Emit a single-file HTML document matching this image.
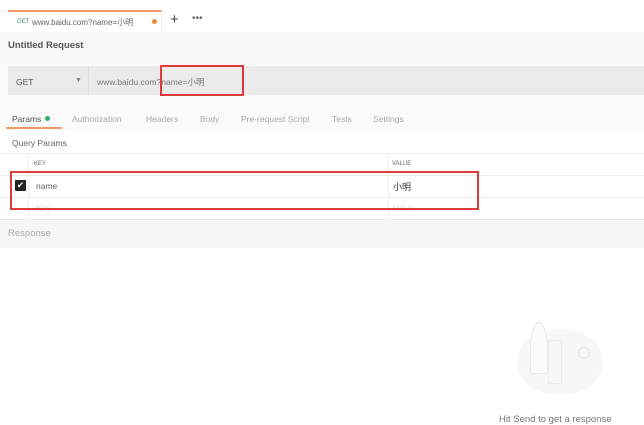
<!DOCTYPE html><html><head><style>
body{margin:0;width:644px;height:425px;background:#fff;font-family:"Liberation Sans","Noto Sans CJK SC",sans-serif;position:relative;overflow:hidden;color:#555}
.a{position:absolute}
</style></head><body>
<div class="a" style="left:8px;top:10px;width:153px;height:22px;border-top:2px solid #f29a6a;background:#fff;border-right:1px solid #eee"></div>
<div class="a" style="left:17px;top:19px;font-size:6px;color:#3a9a5a">GET</div>
<div class="a" style="left:32px;top:17px;font-size:8px;color:#666">www.baidu.com?name=小明</div>
<div class="a" style="left:152px;top:19px;width:5px;height:5px;border-radius:50%;background:#f08a3c"></div>
<div class="a" style="left:170px;top:11px;font-size:15px;color:#444">+</div>
<div class="a" style="left:192px;top:13px;font-size:10px;color:#666">•••</div>
<div class="a" style="left:0;top:32px;width:644px;height:26px;background:#f8f8f8"></div>
<div class="a" style="left:8px;top:40px;font-size:9.5px;color:#555;font-weight:bold">Untitled Request</div>
<div class="a" style="left:0;top:58px;width:644px;height:45px;background:#fafafa"></div>
<div class="a" style="left:8px;top:66px;width:636px;height:29px;background:#ebebeb"></div>
<div class="a" style="left:88px;top:66px;width:1px;height:29px;background:#ddd"></div>
<div class="a" style="left:16px;top:77px;font-size:8.5px;color:#555">GET</div>
<div class="a" style="left:75px;top:77px;font-size:7px;color:#888">▼</div>
<div class="a" style="left:97px;top:76px;font-size:8.5px;color:#777">www.baidu.com?name=小明</div>
<div class="a" style="left:160px;top:65px;width:80px;height:27px;border:2px solid #e03a3a"></div>
<div class="a" style="left:0;top:103px;width:644px;height:27px;background:#fafafa"></div>
<div class="a" style="top:114px;left:12px;font-size:8.5px;color:#555">Params</div>
<div class="a" style="left:45px;top:116px;width:5px;height:5px;border-radius:50%;background:#2fae6b"></div>
<div class="a" style="left:6px;top:127px;width:56px;height:2px;background:#f29a6a"></div>
<div class="a" style="top:114px;left:72px;font-size:8.5px;color:#aaa">Authorization</div>
<div class="a" style="top:114px;left:146px;font-size:8.5px;color:#aaa">Headers</div>
<div class="a" style="top:114px;left:200px;font-size:8.5px;color:#aaa">Body</div>
<div class="a" style="top:114px;left:241px;font-size:8.5px;color:#aaa">Pre-request Script</div>
<div class="a" style="top:114px;left:332px;font-size:8.5px;color:#aaa">Tests</div>
<div class="a" style="top:114px;left:373px;font-size:8.5px;color:#aaa">Settings</div>
<div class="a" style="top:138px;left:12px;font-size:8.5px;color:#666">Query Params</div>
<div class="a" style="left:0;top:153px;width:644px;height:1px;background:#eee"></div>
<div class="a" style="left:0;top:175px;width:644px;height:1px;background:#eee"></div>
<div class="a" style="left:0;top:197px;width:644px;height:1px;background:#eee"></div>
<div class="a" style="left:0;top:219px;width:644px;height:1px;background:#eee"></div>
<div class="a" style="left:28px;top:153px;width:1px;height:67px;background:#eee"></div>
<div class="a" style="left:388px;top:153px;width:1px;height:67px;background:#eee"></div>
<div class="a" style="top:161px;left:34px;font-size:6px;color:#666">KEY</div>
<div class="a" style="top:161px;left:392px;font-size:6px;color:#666">VALUE</div>
<div class="a" style="left:15px;top:180px;width:11px;height:11px;background:#222;color:#fff;font-size:9px;line-height:11px;text-align:center;border-radius:1px">✔</div>
<div class="a" style="top:181px;left:36px;font-size:8.5px;color:#666">name</div>
<div class="a" style="top:180px;left:393px;font-size:9px;color:#333">小明</div>
<div class="a" style="top:203px;left:36px;font-size:8.5px;color:#ddd">Key</div>
<div class="a" style="top:203px;left:393px;font-size:8.5px;color:#ddd">Value</div>
<div class="a" style="left:10px;top:171px;width:465px;height:35px;border:2px solid #e03a3a"></div>
<div class="a" style="left:0;top:221px;width:644px;height:27px;background:#f6f6f6"></div>
<div class="a" style="top:228px;left:8px;font-size:9.5px;color:#aaa">Response</div>
<div class="a" style="left:518px;top:330px;width:84px;height:64px;border-radius:45%;background:#f7f7f7"></div>
<div class="a" style="left:530px;top:322px;width:16px;height:50px;border:1px solid #e8e8e8;border-radius:50% 50% 3px 3px;background:#fbfbfb"></div>
<div class="a" style="left:548px;top:340px;width:12px;height:42px;border:1px solid #ececec"></div>
<div class="a" style="left:578px;top:347px;width:10px;height:10px;border-radius:50%;border:1px solid #e6e6e6"></div>
<div class="a" style="top:414px;left:499px;font-size:9.5px;color:#777">Hit Send to get a response</div>
</body></html>
